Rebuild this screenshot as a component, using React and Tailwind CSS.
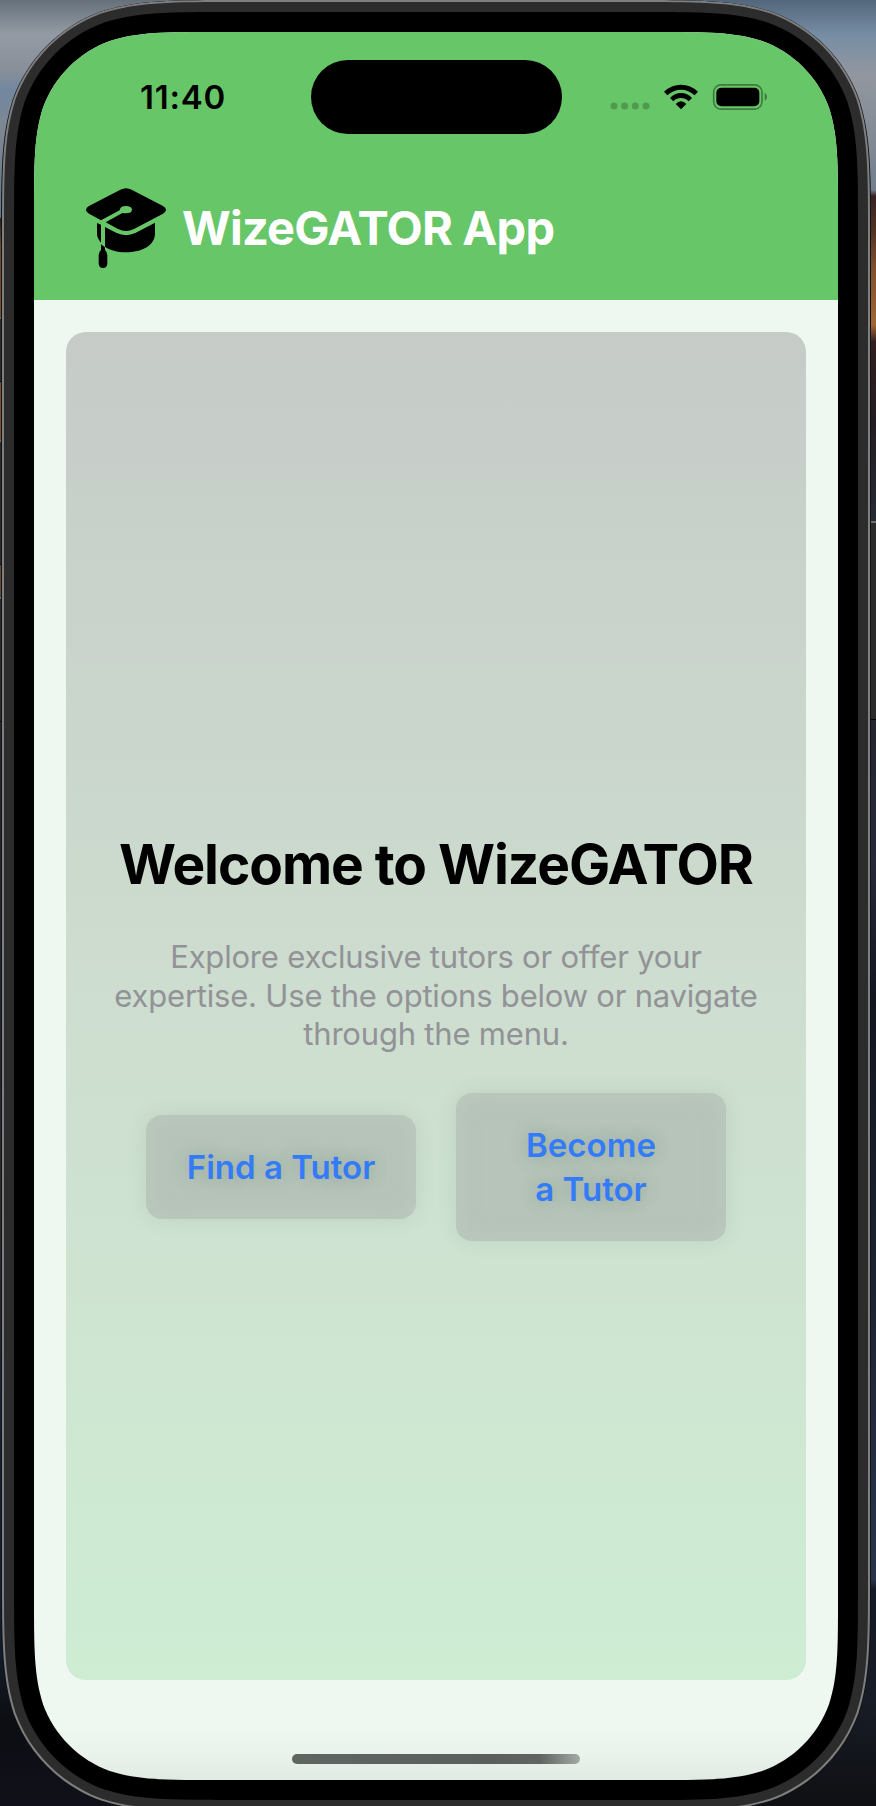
import React from "react";

// Continuous-curvature rounded rectangle, as used by the device outline.
function squircle(w, h, r) {
  const a = [1.52866, 1.08849, 0.86841, 0.63149, 0.37282, 0.16906, 0.07491].map((k) => k * r);
  const [s, c1, c2, e, m, n, t] = a;
  return (
    `M${s} 0H${w - s}C${w - c1} 0 ${w - c2} 0 ${w - e} ${t}C${w - m} ${n} ${w - n} ${m} ${w - t} ${e}C${w} ${c2} ${w} ${c1} ${w} ${s}` +
    `V${h - s}C${w} ${h - c1} ${w} ${h - c2} ${w - t} ${h - e}C${w - n} ${h - m} ${w - m} ${h - n} ${w - e} ${h - t}C${w - c2} ${h} ${w - c1} ${h} ${w - s} ${h}` +
    `H${s}C${c1} ${h} ${c2} ${h} ${e} ${h - t}C${m} ${h - n} ${n} ${h - m} ${t} ${h - e}C0 ${h - c2} 0 ${h - c1} 0 ${h - s}` +
    `V${s}C0 ${c1} 0 ${c2} ${t} ${e}C${n} ${m} ${m} ${n} ${e} ${t}C${c2} 0 ${c1} 0 ${s} 0Z`
  );
}

function Shell({ w, h, r, className, children }) {
  return (
    <div className={className} style={{ clipPath: `path("${squircle(w, h, r)}")` }}>
      {children}
    </div>
  );
}

function GraduationCap() {
  return (
    <svg className="h-20 w-20 shrink-0" viewBox="78 84 240 240">
      <path d="M181 89Q198 80 215 89L309 138Q327 149 309 161L222 207Q198 219 174 207L137 187L187 159Q216 162 216 149Q215 138 198 138Q180 138 179 151L123 181L87 161Q69 149 87 138Z" />
      <path d="M111 189L123 194V248Q111 236 111 220Z" />
      <path d="M135 201L170 219Q198 232 226 219L285 188V220C285 258 245 277 198 277C171 277 149 270 135 260Z" />
      <path d="M123 253L135 262V270Q142 276 142 286V310Q142 324 129 324Q116 324 116 310V286Q116 276 123 270Z" />
    </svg>
  );
}

function StatusIcons() {
  return (
    <svg className="h-[26px] w-[157px]" viewBox="102 252 471 78">
      <g opacity=".22">
        <circle cx="114" cy="318" r="10.5" />
        <circle cx="146" cy="318" r="10.5" />
        <circle cx="178" cy="318" r="10.5" />
        <circle cx="210" cy="318" r="10.5" />
      </g>
      <path d="M264 275Q286 254 315 254Q344 254 366 275L356 286Q338 269 315 269Q292 269 274 286Z" />
      <path d="M282 294Q296 279 315 279Q334 279 348 294L338 304Q328 294 315 294Q302 294 292 304Z" />
      <path d="M299 312Q306 304 315 304Q324 304 331 312L315 328Z" />
      <rect x="413" y="254.500" width="145" height="73" rx="22" fill="none" stroke="#000" strokeOpacity=".38" strokeWidth="5" />
      <rect x="421" y="263" width="129" height="56" rx="15" />
      <path d="M566 278Q573 282 573 290Q573 298 566 302Z" opacity=".4" />
    </svg>
  );
}

function TutorButton({ className, children }) {
  return (
    <button
      className={`flex w-[270px] items-center justify-center rounded-2xl bg-[#b6c4b9] text-center text-[33px] leading-[44px] font-semibold text-[#347bf7] shadow-[0_0_20px_rgba(70,110,80,0.12),inset_0_0_24px_rgba(205,220,205,0.3)] [text-shadow:0_0_18px_rgba(60,90,70,0.3)] ${className}`}
    >
      {children}
    </button>
  );
}

function Wallpaper() {
  return (
    <div className="absolute inset-0 flex">
      <div className="flex-1 bg-[linear-gradient(180deg,#66717c_0px,#949ba5_35px,#888f99_70px,#7288a0_90px,#7d8792_130px,#64798c_217px,#2b2020_219px,#704a2d_245px,#7a512f_318px,#7b5331_430px,#654b38_590px,#29242c_730px,#202333_1000px,#35282a_1200px,#182238_1400px,#141c2c_1650px,#0c0e12_1720px,#10101a_1806px)]" />
      <div className="flex-1 bg-[linear-gradient(180deg,#53677b_0px,#778da5_35px,#92979f_75px,#858c96_130px,#737f8e_190px,#352322_196px,#503224_230px,#80512f_270px,#a06534_325px,#30201f_342px,#251b22_420px,#252a33_520px,#252530_740px,#25293a_860px,#12161f_1000px,#1b2433_1300px,#263044_1500px,#293448_1580px,#141a25_1590px,#171c26_1700px,#0f1013_1806px)]" />
    </div>
  );
}

function SideButton({ className }) {
  return <div className={`absolute border-t-2 border-b border-t-[#6f6f6f] border-b-black bg-[#2b2b2b] ${className}`} />;
}

export default function App() {
  return (
    <div className="relative h-[1806px] w-[876px] overflow-hidden bg-black font-[Inter,sans-serif]">
      <Wallpaper />
      <SideButton className="left-0 top-[317px] h-[65px] w-1" />
      <SideButton className="left-0 top-[440px] h-[125px] w-1" />
      <SideButton className="left-0 top-[597px] h-[125px] w-1" />
      <SideButton className="right-0 top-[521px] h-[199px] w-2" />

      <div className="relative ml-px w-[870px]">
        <Shell w={870} h={1813} r={157} className="h-[1813px] w-[870px] bg-[#111417] px-px">
          <Shell w={868} h={1812} r={156} className="h-[1812px] w-[868px] bg-[#7f7f7f] p-0.5">
            <Shell w={864} h={1808} r={154} className="h-[1808px] w-[864px] bg-[#2c2c2c] p-2.5">
              <Shell w={844} h={1788} r={142} className="h-[1788px] w-[844px] bg-black p-5">
                <Shell
                  w={804}
                  h={1748}
                  r={120}
                  className="flex h-[1748px] w-[804px] flex-col bg-[#eef8f0] bg-[linear-gradient(180deg,transparent_1690px,rgba(0,0,0,0.02)_1722px,rgba(0,0,0,0.06)_1748px)]"
                >
                  <header className="flex h-[268px] shrink-0 flex-col bg-[#67c667]">
                    <div className="flex h-[130px] items-center">
                      <div className="w-[277px] pl-[106px] text-[33px] leading-10 font-semibold tracking-[0.8px]">11:40</div>
                      <div className="h-[74px] w-[251px] rounded-full bg-black" />
                      <div className="ml-12">
                        <StatusIcons />
                      </div>
                    </div>
                    <div className="mt-[26px] flex items-center pl-[52px]">
                      <GraduationCap />
                      <h1 className="ml-4 text-[47px] leading-[60px] font-bold tracking-[-0.8px] text-white">WizeGATOR App</h1>
                    </div>
                  </header>

                  <main className="mx-8 mt-8 flex h-[1348px] shrink-0 flex-col items-center rounded-[20px] bg-[linear-gradient(180deg,#c6cbc8,#cedfd0_54%,#ceedd3)]">
                    <h2 className="mt-[499px] text-[55px] leading-[66px] font-bold tracking-[-1.05px] whitespace-nowrap">Welcome to WizeGATOR</h2>
                    <p className="mt-[41px] text-center text-[31px] leading-[38.5px] tracking-[-0.2px] whitespace-nowrap text-[#929297]">
                      Explore exclusive tutors or offer your
                      <br />
                      expertise. Use the options below or navigate
                      <br />
                      through the menu.
                    </p>
                    <div className="mt-[39px] flex items-center gap-10">
                      <TutorButton className="h-[104px]">Find a Tutor</TutorButton>
                      <TutorButton className="h-[148px]">
                        Become
                        <br />a Tutor
                      </TutorButton>
                    </div>
                  </main>

                  <div className="mx-auto mt-[74px] h-2.5 w-72 rounded-full bg-[linear-gradient(90deg,#606562,#5b5e5c_70%,#606361_86%,#a3aaa5)]" />
                </Shell>
              </Shell>
            </Shell>
          </Shell>
        </Shell>
      </div>
    </div>
  );
}
